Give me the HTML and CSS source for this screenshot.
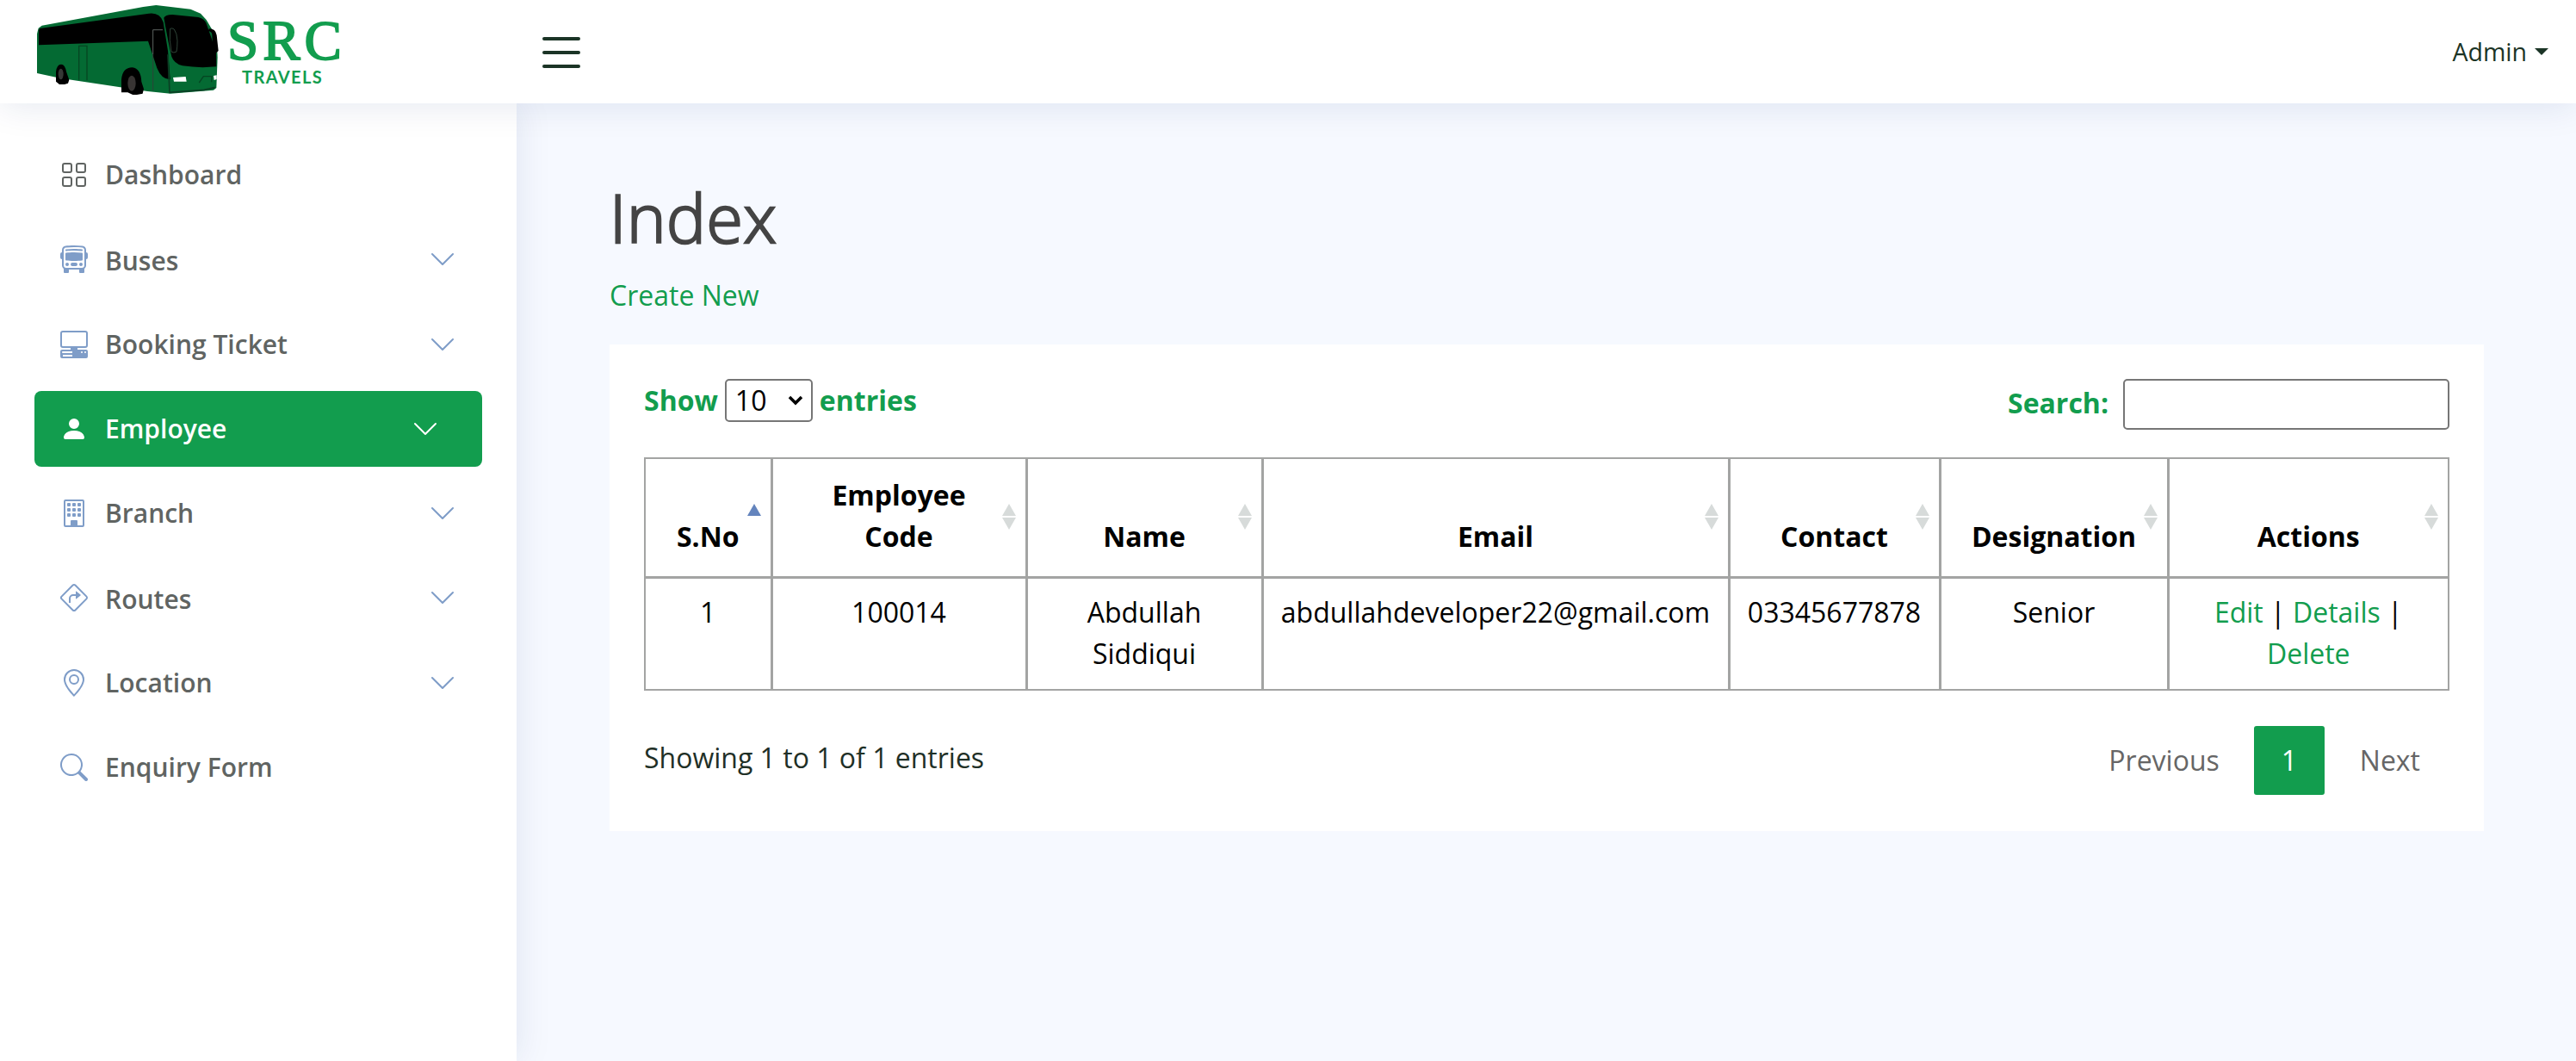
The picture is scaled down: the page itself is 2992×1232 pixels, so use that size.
FILE: index.html
```html
<!DOCTYPE html>
<html lang="en">
<head>
<meta charset="utf-8">
<title>Index - SRC Travels</title>
<link rel="stylesheet" href="styles.css">
</head>
<body>
<svg class="defs" aria-hidden="true">
  <symbol id="i-down" viewBox="0 0 16 16"><path fill-rule="evenodd" d="M1.646 4.646a.5.5 0 0 1 .708 0L8 10.293l5.646-5.647a.5.5 0 0 1 .708.708l-6 6a.5.5 0 0 1-.708 0l-6-6a.5.5 0 0 1 0-.708z"/></symbol>
  <symbol id="i-grid" viewBox="0 0 16 16"><path d="M1 2.5A1.5 1.5 0 0 1 2.500 1h3A1.500 1.500 0 0 1 7 2.500v3A1.500 1.500 0 0 1 5.500 7h-3A1.500 1.500 0 0 1 1 5.500zM2.500 2a.5.5 0 0 0-.5.5v3a.5.5 0 0 0 .5.5h3a.5.5 0 0 0 .5-.5v-3a.5.5 0 0 0-.5-.5zm6.500.5A1.500 1.500 0 0 1 10.500 1h3A1.500 1.500 0 0 1 15 2.500v3A1.500 1.500 0 0 1 13.500 7h-3A1.500 1.500 0 0 1 9 5.500zm1.500-.5a.5.5 0 0 0-.5.5v3a.5.5 0 0 0 .5.5h3a.5.5 0 0 0 .5-.5v-3a.5.5 0 0 0-.5-.5zM1 10.500A1.500 1.500 0 0 1 2.500 9h3A1.500 1.500 0 0 1 7 10.500v3A1.500 1.500 0 0 1 5.500 15h-3A1.500 1.500 0 0 1 1 13.500zm1.500-.5a.5.5 0 0 0-.5.5v3a.5.5 0 0 0 .5.5h3a.5.5 0 0 0 .5-.5v-3a.5.5 0 0 0-.5-.5zm6.500.5A1.500 1.500 0 0 1 10.500 9h3a1.500 1.500 0 0 1 1.500 1.500v3a1.500 1.500 0 0 1-1.500 1.500h-3A1.500 1.500 0 0 1 9 13.500zm1.500-.5a.5.5 0 0 0-.5.5v3a.5.5 0 0 0 .5.5h3a.5.5 0 0 0 .5-.5v-3a.5.5 0 0 0-.5-.5z"/></symbol>
  <symbol id="i-bus" viewBox="0 0 16 16"><path d="M5 11a1 1 0 1 1-2 0 1 1 0 0 1 2 0m8 0a1 1 0 1 1-2 0 1 1 0 0 1 2 0m-6-1a1 1 0 1 0 0 2h2a1 1 0 1 0 0-2zm1-6c-1.876 0-3.426.109-4.552.226A.5.5 0 0 0 3 4.723v3.554a.5.5 0 0 0 .448.497C4.574 8.891 6.124 9 8 9s3.426-.109 4.552-.226A.5.5 0 0 0 13 8.277V4.723a.5.5 0 0 0-.448-.497A44 44 0 0 0 8 4m0-1c-1.837 0-3.353.107-4.448.22a.5.5 0 1 1-.104-.994A44 44 0 0 1 8 2c1.876 0 3.426.109 4.552.226a.5.5 0 1 1-.104.994A43 43 0 0 0 8 3"/><path d="M15 8a1 1 0 0 0 1-1V5a1 1 0 0 0-1-1V2.640c0-1.188-.845-2.232-2.064-2.372A44 44 0 0 0 8 0C5.900 0 4.208.136 3.064.268 1.845.408 1 1.452 1 2.640V4a1 1 0 0 0-1 1v2a1 1 0 0 0 1 1v3.500c0 .818.393 1.544 1 2v2a.5.5 0 0 0 .5.5h2a.5.5 0 0 0 .5-.5V14h6v1.500a.5.5 0 0 0 .5.5h2a.5.5 0 0 0 .5-.5v-2c.607-.456 1-1.182 1-2zM8 1c2.056 0 3.710.134 4.822.261.676.078 1.178.660 1.178 1.379v8.860a1.500 1.500 0 0 1-1.500 1.500h-9A1.500 1.500 0 0 1 2 11.500V2.640c0-.720.502-1.301 1.178-1.379A43 43 0 0 1 8 1"/></symbol>
  <symbol id="i-pc" viewBox="0 0 16 16"><path fill-rule="evenodd" d="M1.500 0A1.500 1.500 0 0 0 0 1.500v7A1.500 1.500 0 0 0 1.500 10H6v1H1a1 1 0 0 0-1 1v3a1 1 0 0 0 1 1h14a1 1 0 0 0 1-1v-3a1 1 0 0 0-1-1h-5v-1h4.500A1.500 1.500 0 0 0 16 8.500v-7A1.500 1.500 0 0 0 14.500 0zm0 1h13a.5.5 0 0 1 .5.5v7a.5.5 0 0 1-.5.5h-13a.5.5 0 0 1-.5-.5v-7a.5.5 0 0 1 .5-.5M12 12.500a.5.5 0 1 1 1 0 .5.5 0 0 1-1 0m2 0a.5.5 0 1 1 1 0 .5.5 0 0 1-1 0M1.500 12h5.500v1H1.500a.5.5 0 0 1 0-1m0 2h5.500v1H1.500z"/></symbol>
  <symbol id="i-person" viewBox="0 0 16 16"><path d="M3 14s-1 0-1-1 1-4 6-4 6 3 6 4-1 1-1 1zm5-6a3 3 0 1 0 0-6 3 3 0 0 0 0 6"/></symbol>
  <symbol id="i-building" viewBox="0 0 16 16"><path d="M4 2.500a.5.5 0 0 1 .5-.5h1a.5.5 0 0 1 .5.5v1a.5.5 0 0 1-.5.5h-1a.5.5 0 0 1-.5-.5zm3 0a.5.5 0 0 1 .5-.5h1a.5.5 0 0 1 .5.5v1a.5.5 0 0 1-.5.5h-1a.5.5 0 0 1-.5-.5zm3.500-.5a.5.5 0 0 0-.5.5v1a.5.5 0 0 0 .5.5h1a.5.5 0 0 0 .5-.5v-1a.5.5 0 0 0-.5-.5zM4 5.500a.5.5 0 0 1 .5-.5h1a.5.5 0 0 1 .5.5v1a.5.5 0 0 1-.5.5h-1a.5.5 0 0 1-.5-.5zM7.500 5a.5.5 0 0 0-.5.5v1a.5.5 0 0 0 .5.5h1a.5.5 0 0 0 .5-.5v-1a.5.5 0 0 0-.5-.5zm2.500.5a.5.5 0 0 1 .5-.5h1a.5.5 0 0 1 .5.5v1a.5.5 0 0 1-.5.5h-1a.5.5 0 0 1-.5-.5zM4.500 8a.5.5 0 0 0-.5.5v1a.5.5 0 0 0 .5.5h1a.5.5 0 0 0 .5-.5v-1a.5.5 0 0 0-.5-.5zm2.500.5a.5.5 0 0 1 .5-.5h1a.5.5 0 0 1 .5.5v1a.5.5 0 0 1-.5.5h-1a.5.5 0 0 1-.5-.5zm3.500-.5a.5.5 0 0 0-.5.5v1a.5.5 0 0 0 .5.5h1a.5.5 0 0 0 .5-.5v-1a.5.5 0 0 0-.5-.5z"/><path d="M2 1a1 1 0 0 1 1-1h10a1 1 0 0 1 1 1v14a1 1 0 0 1-1 1H3a1 1 0 0 1-1-1zm11 0H3v14h3v-2.500a.5.5 0 0 1 .5-.5h3a.5.5 0 0 1 .5.5V15h3z"/><path d="M6.500 12.500h3V15h-3z"/></symbol>
  <symbol id="i-sign" viewBox="0 0 16 16"><path d="M5 8.500A2.500 2.500 0 0 1 7.500 6H9V4.534a.25.25 0 0 1 .410-.192l2.360 1.966c.12.100.12.284 0 .384L9.410 8.658A.25.25 0 0 1 9 8.466V7H7.500A1.500 1.500 0 0 0 6 8.500V11H5z"/><path fill-rule="evenodd" d="M6.950.435c.580-.580 1.520-.580 2.100 0l6.515 6.516c.580.580.580 1.519 0 2.098L9.050 15.565c-.580.580-1.519.580-2.098 0L.435 9.050a1.480 1.480 0 0 1 0-2.098zm1.400.7a.495.495 0 0 0-.7 0L1.134 7.650a.495.495 0 0 0 0 .7l6.516 6.516a.495.495 0 0 0 .7 0l6.516-6.516a.495.495 0 0 0 0-.7L8.350 1.134z"/></symbol>
  <symbol id="i-geo" viewBox="0 0 16 16"><path d="M12.166 8.940c-.524 1.062-1.234 2.120-1.960 3.070A32 32 0 0 1 8 14.580a32 32 0 0 1-2.206-2.570c-.726-.950-1.436-2.008-1.960-3.070C3.304 7.867 3 6.862 3 6a5 5 0 0 1 10 0c0 .862-.305 1.867-.834 2.940M8 16s6-5.686 6-10A6 6 0 0 0 2 6c0 4.314 6 10 6 10"/><path d="M8 8a2 2 0 1 1 0-4 2 2 0 0 1 0 4m0 1a3 3 0 1 0 0-6 3 3 0 0 0 0 6"/></symbol>
  <symbol id="i-search" viewBox="0 0 16 16"><path d="M11.742 10.344a6.500 6.500 0 1 0-1.397 1.398h-.001q.044.060.098.115l3.850 3.850a1 1 0 0 0 1.415-1.414l-3.850-3.850a1 1 0 0 0-.115-.100zM12 6.500a5.500 5.500 0 1 1-11 0 5.500 5.500 0 0 1 11 0"/></symbol>
  <symbol id="i-list" viewBox="0 0 16 16"><path fill-rule="evenodd" d="M2.500 12a.5.5 0 0 1 .5-.5h10a.5.5 0 0 1 0 1H3a.5.5 0 0 1-.5-.5m0-4a.5.5 0 0 1 .5-.5h10a.5.5 0 0 1 0 1H3a.5.5 0 0 1-.5-.5m0-4a.5.5 0 0 1 .5-.5h10a.5.5 0 0 1 0 1H3a.5.5 0 0 1-.5-.5"/></symbol>
  <symbol id="i-sort" viewBox="0 0 16 30"><path d="M8 0l8 14H0zM8 30L0 16h16z"/></symbol>
  <symbol id="i-asc" viewBox="0 0 16 30"><path d="M8 0l8 14H0z"/></symbol>
</svg>

<header class="header">
  <a class="logo">
    <svg class="logo-bus" viewBox="0 0 636 330">
      <path fill="#046a33" d="M0 255V118l5-20 12-9L370 24l45-6 120 14 35 15 20 22 35 60 4 70-4 107-10 8-150 12-80-8L80 272z"/>
      <path fill="#000" d="M10 99L390 47q38-5 50 30l16 100 8 100q-30 0-46-40l-31-94L6 157V105z"/>
      <path fill="#000" d="M442 62q4-10 30-11l90 9q20 4 28 22l34 98 1 52q-60 6-118-3-30-8-38-32-12-50-27-135z"/>
      <path fill="none" stroke="#8d9691" stroke-width="2" d="M438 104h-34v86"/>
      <path fill="none" stroke="#2f4438" stroke-width="3" d="M404 190v126M464 100q6-4 14 2 10 14 11 40 0 22-3 38-10 6-18 0-8-40-4-80"/>
      <path fill="none" stroke="#064522" stroke-width="4" d="M146 278V160h28v120"/>
      <path fill="none" stroke="#0b3f24" stroke-width="5" d="M456 190l6 132 120-9 38-8"/>
      <path fill="#000" d="M600 100q22 0 26 22l6 55-10 10-9-15-3-50q0-12-14-14zM66 284V250q3-26 18-26 14 0 18 26l10 28-4 12-12 4H78zM294 322v-45q4-42 38-42 30 4 32 50l8 25-4 16-30 6-22-10z"/>
      <ellipse cx="83" cy="258" rx="9" ry="19" fill="#353836"/><ellipse cx="330" cy="290" rx="14" ry="27" fill="#383433"/>
      <path fill="#fff" d="M474 270l44-3 3 17h-44zM615 264l11-2v14l-9 3z"/>
      <path fill="none" stroke="#064522" stroke-width="4" d="M565 288l15-22h28v20"/>
    </svg>
    <span class="logo-text"><b>SRC</b><i>TRAVELS</i></span>
  </a>
  <svg class="toggle"><use href="#i-list"/></svg>
  <span class="admin">Admin</span>
</header>

<div class="body">
  <nav class="sidebar">
    <a class="item grid-item"><svg class="ico"><use href="#i-grid"/></svg><span>Dashboard</span></a>
    <a class="item low"><svg class="ico"><use href="#i-bus"/></svg><span>Buses</span><svg class="ico"><use href="#i-down"/></svg></a>
    <a class="item"><svg class="ico"><use href="#i-pc"/></svg><span>Booking Ticket</span><svg class="ico"><use href="#i-down"/></svg></a>
    <a class="item active"><svg class="ico"><use href="#i-person"/></svg><span>Employee</span><svg class="ico"><use href="#i-down"/></svg></a>
    <a class="item"><svg class="ico"><use href="#i-building"/></svg><span>Branch</span><svg class="ico"><use href="#i-down"/></svg></a>
    <a class="item low"><svg class="ico"><use href="#i-sign"/></svg><span>Routes</span><svg class="ico"><use href="#i-down"/></svg></a>
    <a class="item"><svg class="ico"><use href="#i-geo"/></svg><span>Location</span><svg class="ico"><use href="#i-down"/></svg></a>
    <a class="item"><svg class="ico"><use href="#i-search"/></svg><span>Enquiry Form</span></a>
  </nav>

  <main class="main">
    <h1>Index</h1>
    <a class="create">Create New</a>
    <section class="card">
      <div class="controls">
        <label class="length">Show <span class="select">10<svg viewBox="0 0 18 12"><path d="M2 2l7 7 7-7"/></svg></span> entries</label>
        <label class="search"><span>Search:</span><input type="text"></label>
      </div>
      <table>
        <colgroup><col class="c1"><col class="c2"><col class="c3"><col class="c4"><col class="c5"><col class="c6"><col class="c7"></colgroup>
        <thead><tr>
          <th>S.No<svg class="sort asc"><use href="#i-asc"/></svg></th>
          <th>Employee Code<svg class="sort"><use href="#i-sort"/></svg></th>
          <th>Name<svg class="sort"><use href="#i-sort"/></svg></th>
          <th>Email<svg class="sort"><use href="#i-sort"/></svg></th>
          <th>Contact<svg class="sort"><use href="#i-sort"/></svg></th>
          <th>Designation<svg class="sort"><use href="#i-sort"/></svg></th>
          <th>Actions<svg class="sort"><use href="#i-sort"/></svg></th>
        </tr></thead>
        <tbody><tr>
          <td>1</td><td>100014</td><td>Abdullah Siddiqui</td><td>abdullahdeveloper22@gmail.com</td><td>03345677878</td><td>Senior</td>
          <td><a>Edit</a> | <a>Details</a> | <a>Delete</a></td>
        </tr></tbody>
      </table>
      <div class="foot">
        <span>Showing 1 to 1 of 1 entries</span>
        <div class="pages"><span>Previous</span><span class="current">1</span><span>Next</span></div>
      </div>
    </section>
  </main>
</div>
</body>
</html>
```
FILE: styles.css
```css
* { box-sizing: border-box; }
body { margin: 0; height: 1232px; overflow: hidden; background: #f6f9ff; color: #000; font: 32px/48px "Open Sans", sans-serif; display: flex; flex-direction: column; }
.defs { display: none; }
svg { fill: currentColor; flex: none; }

.header { height: 120px; flex: none; display: flex; align-items: center; background: #fff; box-shadow: 0 4px 40px rgba(1, 41, 112, .1); z-index: 2; padding: 0 32px 0 43px; }
.logo { display: flex; width: 577px; height: 120px; }
.logo-bus { width: 212px; height: 110px; }
.logo-text { display: flex; flex-direction: column; color: #129d4e; padding: 16px 0 0 9px; }
.logo-text b { font: 400 65px/62px "Liberation Serif", serif; letter-spacing: 5px; -webkit-text-stroke: 1.8px #129d4e; }
.logo-text i { font: 700 20px/20px Lato, sans-serif; letter-spacing: 1.4px; margin: 1px 0 0 17px; }
.toggle { width: 64px; height: 64px; margin-top: 2px; color: #1b3426; }
.admin { margin-left: auto; display: flex; align-items: center; gap: 9px; padding-bottom: 1px; font-weight: 500; font-size: 28.5px; color: #1b3426; }
.admin::after { content: ""; border: 8px solid transparent; border-top-color: currentColor; border-bottom: 0; }

.body { flex: 1; display: flex; }
.sidebar { width: 600px; flex: none; background: #fff; box-shadow: 0 0 40px rgba(1, 41, 112, .1); padding: 39px 40px; display: flex; flex-direction: column; gap: 10.25px; z-index: 1; }
.item { height: 88px; display: flex; align-items: center; padding: 0 30px; gap: 20px; color: #7f9dc8; font-weight: 600; font-size: 30px; border-radius: 8px; }
.item span { color: #606462; }
.item.low span { padding: 3px 0 0; }
.item .ico { width: 32px; height: 32px; }
.item span + .ico { margin-left: auto; }
.grid-item { color: #606462; }
.grid-item span { padding-bottom: 1px; }
.item.active, .active span { color: #fff; }
.active { background: #129d4e; padding-right: 50px; }

.main { flex: 1; padding: 85px 107px 0 108px; }
h1 { margin: 0; font: 300 77px/96px "Open Sans", sans-serif; letter-spacing: .6px; color: #444; -webkit-text-stroke: 2.4px #444; }
.create { display: block; color: #129d4e; margin: 18px 0 33px; }
.card { background: #fff; height: 565px; padding: 40px 40px 40px 40px; }
.controls { display: flex; justify-content: space-between; height: 91px; color: #129d4e; font-weight: 700; }
label { display: flex; align-items: center; }
.length { height: 50px; gap: 8px; }
.select { display: flex; align-items: center; justify-content: space-between; width: 102px; height: 50px; padding: 0 9px 0 10px; border: 2px solid #767676; border-radius: 5px; color: #000; font-weight: 400; }
.select svg { width: 18px; height: 12px; fill: none; stroke: #000; stroke-width: 3.5; }
.search { height: 59px; gap: 17px; }
.search span { padding-bottom: 3px; }
.search input { width: 379px; height: 59px; border: 2px solid #767676; border-radius: 5px; background: transparent; }

table { width: 2096px; table-layout: fixed; border-collapse: collapse; color: #000; }
.c1 { width: 147px; } .c2 { width: 296px; } .c3 { width: 274px; } .c4 { width: 542px; } .c5 { width: 245px; } .c6 { width: 265px; } .c7 { width: 326px; }
th, td { border: 3px solid #a3a4a3; text-align: center; padding: 15px 20px; }
th { position: relative; height: 138px; vertical-align: bottom; padding: 18px 36px 22px; border-top-width: 2px; }
td { height: 130px; vertical-align: top; border-bottom-width: 2px; }
th:first-child, td:first-child { border-left-width: 2px; }
th:last-child, td:last-child { border-right-width: 2px; }
th:first-child, th:nth-child(6), th:nth-child(5) { padding-left: 20px; padding-right: 20px; }
.sort { position: absolute; right: 11px; top: 52px; width: 16px; height: 30px; color: #d7dbda; }
.asc { color: #6484bd; }
td a { color: #129d4e; }

.foot { display: flex; justify-content: space-between; padding-top: 41px; }
.foot > span { padding-top: 13px; color: #1f3027; }
.pages { display: flex; align-items: center; color: #666; height: 80px; }
.pages span { padding: 0 34px; }
.pages .current { background: #129d4e; color: #fff; height: 80px; width: 82px; margin: 0 7px 0 6px; line-height: 80px; border-radius: 3px; padding: 0; text-align: center; }
```
